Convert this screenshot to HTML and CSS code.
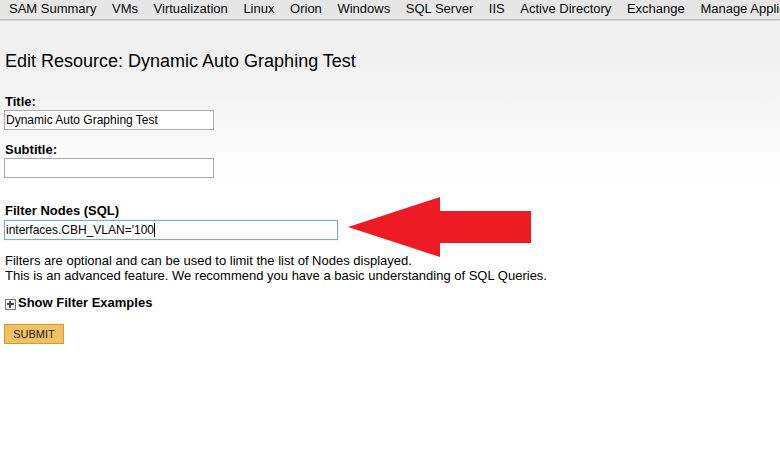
FILE: index.html
```html
<!DOCTYPE html>
<html>
<head>
<meta charset="utf-8">
<link rel="stylesheet" href="styles.css">
</head>
<body>
<nav class="tabs">
  <span class="tab">SAM Summary</span>
  <span class="tab">VMs</span>
  <span class="tab">Virtualization</span>
  <span class="tab">Linux</span>
  <span class="tab">Orion</span>
  <span class="tab">Windows</span>
  <span class="tab">SQL Server</span>
  <span class="tab">IIS</span>
  <span class="tab">Active Directory</span>
  <span class="tab">Exchange</span>
  <span class="tab">Manage Applications</span>
</nav>
<main class="page">
  <h1 class="title">Edit Resource: Dynamic Auto Graphing Test</h1>
  <div class="field field-first">
    <label class="label">Title:</label>
    <input class="input" type="text" value="Dynamic Auto Graphing Test">
  </div>
  <div class="field">
    <label class="label">Subtitle:</label>
    <input class="input" type="text" value="">
  </div>
  <div class="field field-filter">
    <label class="label">Filter Nodes (SQL)</label>
    <div class="input input-wide input-focus">interfaces.CBH_VLAN='100<span class="caret"></span></div>
  </div>
  <p class="help">Filters are optional and can be used to limit the list of Nodes displayed.<br>This is an advanced feature. We recommend you have a basic understanding of SQL Queries.</p>
  <div class="toggle"><span class="plus"><span class="plus-h"></span><span class="plus-v"></span></span>Show Filter Examples</div>
  <button class="submit">SUBMIT</button>
</main>
<svg class="arrow" width="190" height="66" viewBox="0 0 190 66">
  <polygon points="3,33 95,3 95,17 186,17 186,49 95,49 95,63" fill="#ed1c24"/>
</svg>
</body>
</html>
```

FILE: styles.css
```css
html, body {
  margin: 0;
  padding: 0;
}
body {
  font-family: "Liberation Sans", Arial, sans-serif;
  color: #000;
  background: linear-gradient(to bottom, #eeeeee 0px, #f1f1f1 60px, #ffffff 190px, #ffffff 100%);
  min-height: 476px;
  position: relative;
  overflow: hidden;
}
.tabs {
  display: flex;
  gap: 15.6px;
  padding: 1px 0 0 9px;
  box-sizing: border-box;
  height: 20px;
  border-bottom: 1px solid #b9b9b9;
  box-shadow: 0 1px 0 #dcdcdc;
  background: #e6e6e6;
  white-space: nowrap;
  overflow: hidden;
  font-size: 13px;
  line-height: 15px;
  color: #0a0a0a;
}
.tab {
  flex: none;
}
.page {
  padding: 0 4px;
}
.title {
  margin: 31px 0 0 1px;
  font-size: 18px;
  font-weight: normal;
  line-height: 21px;
}
.field {
  display: flex;
  flex-direction: column;
  align-items: flex-start;
  margin-top: 12px;
}
.field-first {
  margin-top: 22px;
}
.field-filter {
  margin-top: 25px;
}
.label {
  font-size: 13px;
  font-weight: bold;
  line-height: 16px;
  padding-left: 1px;
}
.input {
  box-sizing: border-box;
  width: 210px;
  height: 20px;
  margin: 0;
  border: 1px solid #a9a9a9;
  background: #fff;
  font-family: "Liberation Sans", Arial, sans-serif;
  font-size: 12px;
  line-height: 16px;
  padding: 1px 1px;
  color: #000;
  outline: none;
}
.input-wide {
  width: 334px;
  margin-top: 1px;
}
.input-focus {
  border: 1px solid #7ea3dd;
  box-shadow: 0 0 1px #b8cdf0;
  display: flex;
  align-items: center;
  white-space: nowrap;
}
.caret {
  display: inline-block;
  width: 1px;
  height: 14px;
  background: #000;
}
.help {
  margin: 13px 0 0 1px;
  font-size: 13px;
  line-height: 15px;
}
.toggle {
  display: flex;
  align-items: center;
  margin-top: 12px;
  font-size: 13px;
  font-weight: bold;
  line-height: 16px;
  padding-left: 1px;
}
.plus {
  position: relative;
  box-sizing: border-box;
  width: 11px;
  height: 11px;
  border: 1px solid #7a7a7a;
  background: #fff;
  margin: 2px 2px 0 0;
}
.plus-h {
  position: absolute;
  left: 1px;
  top: 3px;
  width: 7px;
  height: 2px;
  background: #444;
}
.plus-v {
  position: absolute;
  left: 3px;
  top: 1px;
  width: 2px;
  height: 7px;
  background: #444;
}
.submit {
  display: block;
  margin-top: 13px;
  box-sizing: border-box;
  width: 60px;
  height: 20px;
  padding: 0;
  border: 1px solid #e0922b;
  background: #f2c162;
  font-family: "Liberation Sans", Arial, sans-serif;
  font-size: 11px;
  color: #222;
  border-radius: 0;
}
.arrow {
  position: absolute;
  left: 345px;
  top: 194px;
}
```
